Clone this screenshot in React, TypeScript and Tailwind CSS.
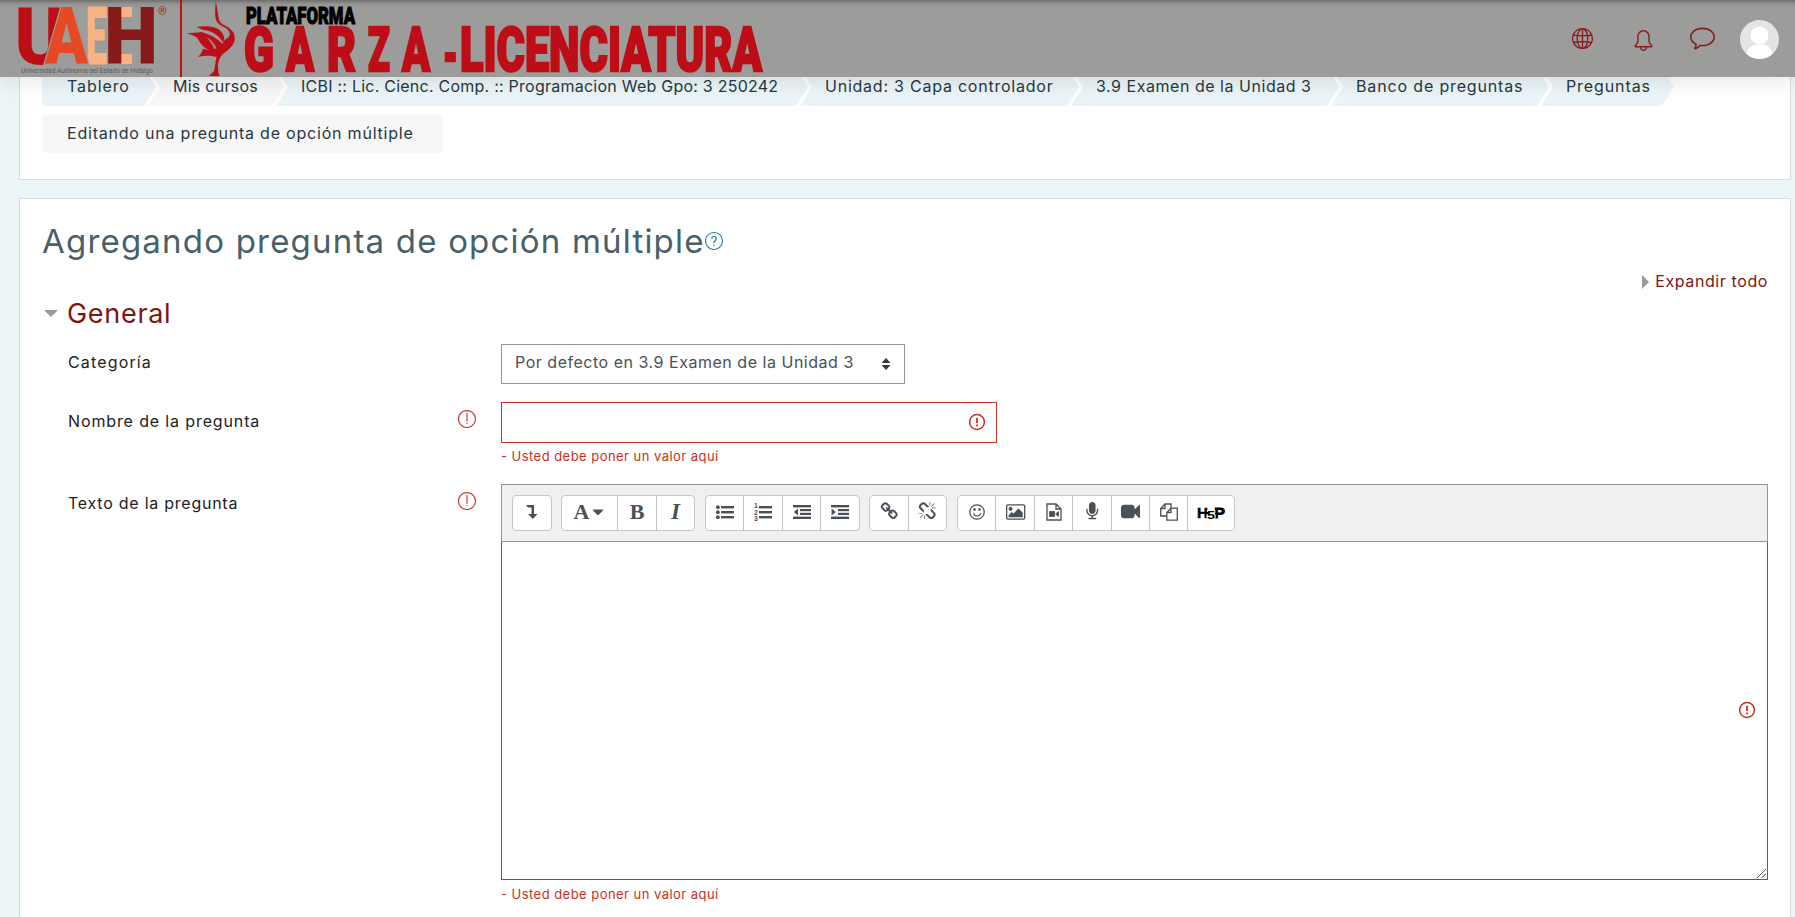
import React from 'react';
import { SlGlobe, SlBell, SlBubble, SlExclamation, SlQuestion } from 'react-icons/sl';

type IconName = keyof typeof PATHS;

const PATHS = {
  caret:
    'M1408 704q0 26-19 45l-448 448q-19 19-45 19t-45-19l-448-448q-19-19-19-45t19-45 45-19h896q26 0 45 19t19 45z',
  link: 'M1520 1216q0-40-28-68l-208-208q-28-28-68-28-42 0-72 32 3 3 19 18.5t21.5 21.5 15 19 13 25.5 3.5 27.5q0 40-28 68t-68 28q-15 0-27.5-3.5t-25.5-13-19-15-21.5-21.5-18.5-19q-33 31-33 73 0 40 28 68l206 207q27 27 68 27 40 0 68-26l147-146q28-28 28-67zm-703-705q0-40-28-68l-206-207q-28-28-68-28-39 0-68 27l-147 146q-28 28-28 67 0 40 28 68l208 208q27 27 68 27 42 0 72-31-3-3-19-18.5t-21.5-21.5-15-19-13-25.5-3.5-27.5q0-40 28-68t68-28q15 0 27.5 3.5t25.5 13 19 15 21.5 21.5 18.5 19q33-31 33-73zm895 705q0 120-85 203l-147 146q-83 83-203 83-121 0-204-85l-206-207q-83-83-83-203 0-123 88-209l-88-88q-86 88-208 88-120 0-204-84l-208-208q-84-84-84-204t85-203l147-146q83-83 203-83 121 0 204 85l206 207q83 83 83 203 0 123-88 209l88 88q86-88 208-88 120 0 204 84l208 208q84 84 84 204z',
  unlink:
    'M503 1271l-256 256q-10 9-23 9-12 0-23-9-9-10-9-23t9-23l256-256q10-9 23-9t23 9q9 10 9 23t-9 23zm169 41v320q0 14-9 23t-23 9-23-9-9-23v-320q0-14 9-23t23-9 23 9 9 23zm-224-224q0 14-9 23t-23 9h-320q-14 0-23-9t-9-23 9-23 23-9h320q14 0 23 9t9 23zm1264 128q0 120-85 203l-147 146q-83 83-203 83-121 0-204-85l-334-335q-21-21-42-56l239-18 273 274q28 28 68 28.5t68-27.5l147-146q28-28 28-67 0-40-28-68l-274-275 18-239q35 21 56 42l336 336q84 86 84 204zm-617-724l-239 18-273-274q-28-28-68-28-39 0-68 27l-147 146q-28 28-28 67 0 40 28 68l274 274-18 240q-35-21-56-42l-336-336q-84-86-84-204 0-120 85-203l147-146q83-83 203-83 121 0 204 85l334 335q21 21 42 56zm633 84q0 14-9 23t-23 9h-320q-14 0-23-9t-9-23 9-23 23-9h320q14 0 23 9t9 23zm-544-544v320q0 14-9 23t-23 9-23-9-9-23v-320q0-14 9-23t23-9 23 9 9 23zm407 151l-256 256q-11 9-23 9t-23-9q-9-10-9-23t9-23l256-256q10-9 23-9t23 9q9 10 9 23t-9 23z',
  image:
    'M576 576q0 80-56 136t-136 56-136-56-56-136 56-136 136-56 136 56 56 136zm1024 384v448h-1408v-192l320-320 160 160 512-512zm96-704h-1600q-13 0-22.5 9.5t-9.5 22.5v1216q0 13 9.5 22.5t22.5 9.5h1600q13 0 22.5-9.5t9.5-22.5v-1216q0-13-9.5-22.5t-22.5-9.5zm160 32v1216q0 66-47 113t-113 47h-1600q-66 0-113-47t-47-113v-1216q0-66 47-113t113-47h1600q66 0 113 47t47 113z',
  mic: 'M1472 704v128q0 221-147.5 384.5t-364.5 187.5v132h256q26 0 45 19t19 45-19 45-45 19h-640q-26 0-45-19t-19-45 19-45 45-19h256v-132q-217-24-364.5-187.5t-147.5-384.5v-128q0-26 19-45t45-19 45 19 19 45v128q0 185 131.5 316.5t316.5 131.5 316.5-131.5 131.5-316.5v-128q0-26 19-45t45-19 45 19 19 45zm-256-384v512q0 132-94 226t-226 94-226-94-94-226v-512q0-132 94-226t226-94 226 94 94 226z',
  video:
    'M1792 352v1088q0 42-39 59-13 5-25 5-27 0-45-19l-403-403v166q0 119-84.5 203.5t-203.5 84.5h-704q-119 0-203.5-84.5t-84.5-203.5v-704q0-119 84.5-203.5t203.5-84.5h704q119 0 203.5 84.5t84.5 203.5v165l403-402q18-19 45-19 12 0 25 5 39 17 39 59z',
};

function Fa({ name, className = 'size-[18.5px]' }: { name: IconName; className?: string }) {
  return (
    <svg viewBox={name === 'image' ? '-64 0 1984 1792' : '0 0 1792 1792'} className={className} fill="currentColor">
      <path d={PATHS[name]} />
    </svg>
  );
}

function Lines({ kind }: { kind: 'ul' | 'ol' | 'outdent' | 'indent' }) {
  const list = kind === 'ul' || kind === 'ol';
  return (
    <svg viewBox="0 0 18 18" className="size-[18px] overflow-visible" fill="currentColor">
      {list ? (
        <>
          <rect x="5" y="3" width="13" height="2.4" />
          <rect x="5" y="8" width="13" height="2.4" />
          <rect x="5" y="13" width="13" height="2.4" />
        </>
      ) : (
        <>
          <rect x="0" y="2" width="18" height="2.4" />
          <rect x="7" y="6" width="11" height="2.2" />
          <rect x="7" y="9.8" width="11" height="2.2" />
          <rect x="0" y="13.6" width="18" height="2.4" />
        </>
      )}
      {kind === 'ul' && (
        <>
          <circle cx="1.9" cy="4.2" r="1.9" />
          <circle cx="1.9" cy="9.2" r="1.9" />
          <circle cx="1.9" cy="14.2" r="1.9" />
        </>
      )}
      {kind === 'ol' && (
        <g fontFamily="Liberation Sans" fontWeight="700" fontSize="6.8">
          <text x="0" y="5.4">1</text>
          <text x="0" y="11.6">2</text>
          <text x="0" y="17.8">3</text>
        </g>
      )}
      {kind === 'outdent' && <path d="M5 5.6v7L.8 9.1z" />}
      {kind === 'indent' && <path d="M.6 5.6v7l4.2-3.5z" />}
    </svg>
  );
}

function Btn({ children, w }: { children: React.ReactNode; w: string }) {
  return (
    <button className={`${w} flex h-full items-center justify-center border-r border-[#c6c6c6] pb-[3px] last:border-r-0`}>
      {children}
    </button>
  );
}

function Group({ children, className = '' }: { children: React.ReactNode; className?: string }) {
  return (
    <div className={`flex h-9 overflow-hidden rounded-[4px] border border-[#c6c6c6] bg-white ${className}`}>{children}</div>
  );
}

function ErrorMark({ className = '' }: { className?: string }) {
  return (
    <svg viewBox="0 0 18 18" className={`size-[18px] ${className}`} fill="none" stroke="#ca3120">
      <circle cx="9" cy="9" r="7.4" strokeWidth="1.5" />
      <path d="M9 4.8v5.2M9 11.4v1.8" strokeWidth="1.8" />
    </svg>
  );
}

function Brand() {
  return (
    <svg viewBox="0 0 780 77" className="h-[77px] w-[780px] shrink-0" fontFamily="Roboto, sans-serif" fontWeight="900">
      <g fontSize="80">
        <text x="14.500" y="64" fill="#bd0e18" textLength="51" lengthAdjust="spacingAndGlyphs">U</text>
        <text x="86" y="64" fill="#f7b384" stroke="#f7b384" textLength="21" lengthAdjust="spacingAndGlyphs">E</text>
        <rect x="121" y="7" width="11" height="10" fill="#f7b384" />
        <rect x="121" y="54" width="11" height="10" fill="#f7b384" />
        <text x="45" y="64" fill="#e54a25" stroke="#9c9c9a" strokeWidth="3" paintOrder="stroke" textLength="43" lengthAdjust="spacingAndGlyphs">A</text>
        <text x="104" y="64" fill="#861a18" textLength="54" lengthAdjust="spacingAndGlyphs">H</text>
      </g>
      <text x="158" y="15" fontSize="11" fontWeight="400" fill="#9c2220">®</text>
      <text x="21" y="73" fontSize="6.6" fontWeight="400" fill="#5d5b5b" textLength="132" lengthAdjust="spacingAndGlyphs">
        Universidad Autónoma del Estado de Hidalgo
      </text>
      <rect x="180" y="0" width="2" height="77" fill="#bd0e18" />
      <g fill="#bd0e18">
        <path d="M215.700 1.500c2 8 2.300 13 3.300 18 1.500 5 6 5.500 10 8.500 4 3 6 6 5.800 11-.5 8-8.800 12-12.800 16-3.500 4-4 9-4 13l.5 5 1 3H209l5-5c1.500-6 1.500-10 2.500-14-7-2-12-1.500-18.500 0 3-3 4-5 5-8 7 1.500 13 .5 17-2.500 4-3 3-6 6-7.500 4-1.500 5-6 2-9-3-3.500-8-4-11-8-2.500-4-2-12-1.300-20.500z" />
        <path d="M196.500 27c11-1.500 20-.5 25 5 3 3.500 3.500 7 1.500 10.500-5-8-11-11.500-19.500-12.500z" />
        <path d="M186.500 33.500c5-1 10-.8 15-1.500 10 3 18 8 22 13-1 3-3 5-6 6-2-6-6-11-11-14 4 5 7.500 9 8.500 14.500-10-1-15-8-18-14-3-1.500-5-3-10.500-4z" />
      </g>
      <text x="246" y="24" fontSize="24" fill="#000" stroke="#000" strokeWidth="1" textLength="109" lengthAdjust="spacingAndGlyphs">
        PLATAFORMA
      </text>
      <g fontSize="61" fill="#bd0e18" stroke="#bd0e18" strokeWidth="2.4">
        <text x="244" y="71" textLength="30" lengthAdjust="spacingAndGlyphs">G</text>
        <text x="286" y="71" textLength="28" lengthAdjust="spacingAndGlyphs">A</text>
        <text x="327" y="71" textLength="29" lengthAdjust="spacingAndGlyphs">R</text>
        <text x="368" y="71" textLength="22" lengthAdjust="spacingAndGlyphs">Z</text>
        <text x="402" y="71" textLength="28" lengthAdjust="spacingAndGlyphs">A</text>
        <text x="443" y="76" textLength="15" lengthAdjust="spacingAndGlyphs">-</text>
        <text x="460" y="71" textLength="302" lengthAdjust="spacingAndGlyphs">LICENCIATURA</text>
      </g>
    </svg>
  );
}

const FIRST = '[clip-path:polygon(0_0,calc(100%_-_12px)_0,100%_50%,calc(100%_-_12px)_100%,0_100%)]';
const MIDDLE = '[clip-path:polygon(0_0,calc(100%_-_12px)_0,100%_50%,calc(100%_-_12px)_100%,0_100%,12px_50%)]';

const crumbs = [
  { text: 'Tablero', box: 'w-[114px] rounded-l bg-[#ebf4f7]', shape: FIRST, track: 'tracking-[0.9px]' },
  { text: 'Mis cursos', box: 'w-[136px] -ml-2 bg-[#f7f7f7]', shape: MIDDLE, track: 'tracking-[0.26px]' },
  { text: 'ICBI :: Lic. Cienc. Comp. :: Programacion Web Gpo: 3 250242', box: 'w-[532px] -ml-2 bg-[#ebf4f7]', shape: MIDDLE, track: 'tracking-[0.24px]' },
  { text: 'Unidad: 3 Capa controlador', box: 'w-[279px] -ml-2 bg-[#ebf4f7]', shape: MIDDLE, track: 'tracking-[0.77px]' },
  { text: '3.9 Examen de la Unidad 3', box: 'w-[268px] -ml-2 bg-[#ebf4f7]', shape: MIDDLE, track: 'tracking-[0.53px]' },
  { text: 'Banco de preguntas', box: 'w-[218px] -ml-2 bg-[#ebf4f7]', shape: MIDDLE, track: 'tracking-[0.85px]' },
  { text: 'Preguntas', box: 'w-[133px] -ml-2 bg-[#ebf4f7]', shape: MIDDLE, track: 'tracking-[0.9px]' },
];

export default function App() {
  return (
    <div className="flex h-[917px] w-[1795px] flex-col overflow-hidden bg-[#ebf4f7] font-['Inter',sans-serif] text-[16px] font-normal leading-6 text-[#1d2125]">
      <header className="relative z-10 flex h-[77px] shrink-0 items-center justify-between bg-[linear-gradient(#6f6f6e,#939391_4px,#9c9c9a_9px)] pr-4 shadow-[0_2px_22px_rgba(0,0,0,0.12)]">
        <Brand />
        <div className="flex items-center text-[#8b1a1a]">
          <SlGlobe className="mr-[39px] size-[21px]" />
          <SlBell className="mt-1 mr-[36px] ml-px size-[21px]" />
          <SlBubble className="mr-[25px] size-[25px]" />
          <svg viewBox="0 0 39 39" className="mt-0.5 size-[39px] rounded-full bg-[#e4e4e4]" fill="#fff">
            <circle cx="19.500" cy="15.500" r="9" />
            <path d="M6 39c0-9 4-13.500 9-14.500h9c5 1 9 5.500 9 14.500z" />
          </svg>
        </div>
      </header>

      <section className="-mt-[9px] ml-[19px] h-[112px] w-[1772px] shrink-0 border border-t-0 border-[#d3dfe3] bg-white pl-[22px]">
        <nav className="flex flex-col gap-[9px] text-[#263840]">
          <div className="flex">
            {crumbs.map((c) => (
              <span key={c.text} className={`flex h-[38px] items-center whitespace-nowrap pb-0.5 pl-[25px] ${c.box} ${c.shape} ${c.track}`}>
                {c.text}
              </span>
            ))}
          </div>
          <span className="flex h-[38px] w-[401px] items-center rounded bg-[#f7f7f7] pb-0.5 pl-[25px] tracking-[0.79px]">
            Editando una pregunta de opción múltiple
          </span>
        </nav>
      </section>

      <section className="mt-[18px] ml-[19px] flex h-[720px] w-[1772px] shrink-0 flex-col border border-[#d3dfe3] bg-white pl-[22px]">
        <div className="flex h-[67px] items-end text-[33px] leading-[50px] text-[#47606b]">
          <h1 className="tracking-[1.2px]">Agregando pregunta de opción múltiple</h1>
          <SlQuestion className="mb-4 size-[18px] text-[#1f86a5]" />
        </div>
        <div className="mr-[22px] flex h-[27px] items-end justify-end gap-1.5 text-[#7d1512]">
          <svg viewBox="0 0 7 14" className="mb-[4px] h-[14px] w-[7px]" fill="#999">
            <path d="M0 0l7 7-7 7z" />
          </svg>
          <span className="tracking-[0.6px]">Expandir todo</span>
        </div>
        <div className="flex h-[40px] items-center pl-0.5 text-[27px] text-[#7d1512]">
          <svg viewBox="0 0 14 7" className="mr-[9px] h-[7px] w-[14px]" fill="#999">
            <path d="M0 0h14l-7 7z" />
          </svg>
          <h2 className="pt-0.5 tracking-[0.7px]">General</h2>
        </div>

        <div className="flex h-[58px] pl-[26px] pt-[11px]">
          <label className="w-[433px] pt-[6px] tracking-[1.15px]">Categoría</label>
          <div className="flex h-10 w-[404px] items-center justify-between border border-[#8f959e] pr-[13px] pl-[13px] text-[#495057]">
            <span className="pb-1 tracking-[0.52px]">Por defecto en 3.9 Examen de la Unidad 3</span>
            <svg viewBox="0 0 10 12" className="h-3 w-[10px]" fill="#343a40">
              <path d="M5 0l4.500 5h-9zM5 12l4.500-5h-9z" />
            </svg>
          </div>
        </div>

        <div className="flex h-[75px] pl-[26px]">
          <div className="flex w-[433px] justify-between pt-[18px] pr-[25px]">
            <label className="tracking-[0.87px]">Nombre de la pregunta</label>
            <SlExclamation className="mt-px size-[18px] text-[#ca3120]" />
          </div>
          <div className="pt-[11px]">
            <div className="flex h-[41px] w-[496px] items-center justify-end border border-[#ca3120] pr-[10px] pb-px">
              <ErrorMark />
            </div>
            <p className="mt-[3px] text-[13px] leading-5 tracking-[0.46px] text-[#ca3120]">- Usted debe poner un valor aquí</p>
          </div>
        </div>

        <div className="flex pl-[26px]">
          <div className="flex w-[433px] justify-between pt-[25px] pr-[25px]">
            <label className="tracking-[0.75px]">Texto de la pregunta</label>
            <SlExclamation className="mt-px size-[18px] text-[#ca3120]" />
          </div>
          <div className="w-[1267px] pt-[18px]">
            <div className="flex h-[58px] items-start gap-[9px] border border-[#8f959e] bg-[#f0f0f0] pt-[10px] pl-[10px] text-[#495057]">
              <Group>
                <Btn w="w-[38px]">
                  <svg viewBox="0 0 12 16" className="h-4 w-3" fill="currentColor">
                    <path d="M0 1h8v9h3.500L6.800 15 2 10h3.500V3.500H2z" />
                  </svg>
                </Btn>
              </Group>
              <Group>
                <Btn w="w-[56px]">
                  <span className="font-['Liberation_Serif',serif] text-[22px] font-bold">A</span>
                  <Fa name="caret" className="-mr-0.5 size-[18px]" />
                </Btn>
                <Btn w="w-[39px]">
                  <span className="font-['Liberation_Serif',serif] text-[22px] font-bold">B</span>
                </Btn>
                <Btn w="w-[37px]">
                  <span className="font-['Liberation_Serif',serif] text-[23px] font-bold italic">I</span>
                </Btn>
              </Group>
              <Group className="ml-px">
                <Btn w="w-[38px]"><Lines kind="ul" /></Btn>
                <Btn w="w-[39px]"><Lines kind="ol" /></Btn>
                <Btn w="w-[38px]"><Lines kind="outdent" /></Btn>
                <Btn w="w-[38px]"><Lines kind="indent" /></Btn>
              </Group>
              <Group>
                <Btn w="w-[39px]"><Fa name="link" /></Btn>
                <Btn w="w-[37px]"><Fa name="unlink" /></Btn>
              </Group>
              <Group className="ml-px">
                <Btn w="w-[38px]">
                  <svg viewBox="0 0 16 16" className="size-4" fill="none" stroke="currentColor" strokeWidth="1.3">
                    <circle cx="8" cy="8" r="7.200" />
                    <path d="M4.500 9.800c1.300 3 5.700 3 7 0" strokeLinecap="round" />
                    <circle cx="5.500" cy="5.500" r=".7" fill="currentColor" />
                    <circle cx="10.500" cy="5.500" r=".7" fill="currentColor" />
                  </svg>
                </Btn>
                <Btn w="w-[39px]"><Fa name="image" className="ml-0.5 h-[18px] w-5" /></Btn>
                <Btn w="w-[38px]">
                  <svg viewBox="0 0 16 18" className="h-[18px] w-4" fill="none" stroke="currentColor" strokeWidth="1.3">
                    <path d="M1 1h9l5 5v11H1zM10 1v5h5" />
                    <path d="M3.500 8.500h5v5h-5zM9.500 11l3-2.500v5z" fill="currentColor" strokeWidth=".8" />
                  </svg>
                </Btn>
                <Btn w="w-[39px]"><Fa name="mic" /></Btn>
                <Btn w="w-[38px]"><Fa name="video" className="size-[19px]" /></Btn>
                <Btn w="w-[38px]">
                  <svg viewBox="0 0 18 18" className="size-[18px]" fill="none" stroke="currentColor" strokeWidth="1.3">
                    <path d="M6.500 13H.7V5.500L5 1h6v4M5 1v4.500H.7" />
                    <path d="M6.800 9.500L11 5.200h6.300v12H6.800zM11 5.200v4.300H6.800" />
                  </svg>
                </Btn>
                <Btn w="w-[46px]">
                  <svg viewBox="0 0 28 14" className="mt-0.5 h-[14px] w-7 overflow-visible" fontFamily="Liberation Sans, sans-serif" fontWeight="700" fill="#000">
                    <text x="0" y="12" fontSize="15" textLength="11" lengthAdjust="spacingAndGlyphs" stroke="#000" strokeWidth=".5">H</text>
                    <text x="17" y="12" fontSize="15" textLength="11" lengthAdjust="spacingAndGlyphs" stroke="#000" strokeWidth=".8">P</text>
                    <text x="10" y="12.500" fontSize="11" textLength="8" lengthAdjust="spacingAndGlyphs" stroke="#fff" strokeWidth="1.6" paintOrder="stroke">5</text>
                    <rect x="8" y="6" width="4" height="2" />
                  </svg>
                </Btn>
              </Group>
            </div>
            <div className="relative h-[338px] border border-t-0 border-[#ca3120] bg-white">
              <ErrorMark className="absolute right-[11px] top-[159px]" />
              <svg viewBox="0 0 9 9" className="absolute right-px bottom-px size-[9px]" stroke="#555" strokeWidth="1">
                <path d="M0 9l9-9M4.500 9L9 4.500" />
              </svg>
            </div>
            <p className="mt-[4px] text-[13px] leading-5 tracking-[0.46px] text-[#ca3120]">- Usted debe poner un valor aquí</p>
          </div>
        </div>
      </section>
    </div>
  );
}
